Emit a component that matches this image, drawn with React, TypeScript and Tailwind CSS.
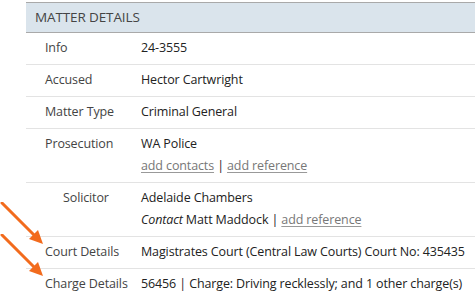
const Row = ({
  label,
  children,
  indent = false,
}: {
  label: string;
  children: React.ReactNode;
  indent?: boolean;
}) => (
  <div className="flex border-b border-[#e3e3e3] pt-[4px] pb-[5px] leading-[22px]">
    <div className={`w-[115px] shrink-0 text-[#444] ${indent ? "pl-[37px]" : "pl-[19px]"}`}>
      {label}
    </div>
    <div className="whitespace-nowrap text-[#222]">{children}</div>
  </div>
);

const Link = ({ children }: { children: React.ReactNode }) => (
  <span className="text-[#777] underline underline-offset-2 decoration-[#999]">{children}</span>
);

const Arrow = ({ top }: { top: number }) => (
  <svg
    className="absolute left-0"
    style={{ top }}
    width="48"
    height="48"
    viewBox="0 0 48 48"
  >
    <line x1="2" y1="1" x2="36" y2="35" stroke="#f26b1d" strokeWidth="3" strokeLinecap="round" />
    <polygon points="43,42 29,37 38,28" fill="#f26b1d" />
  </svg>
);

export default function App() {
  return (
    <div
      className="relative h-[293px] w-[475px] overflow-hidden bg-white pt-[2px] pl-[26px] text-[12.5px] tracking-[-0.12px]"
      style={{ fontFamily: '"Open Sans", "Noto Sans", sans-serif' }}
    >
      <div className="border-y border-[#a9a9a9] bg-[#dae4ec] pl-[9px] h-[31px] leading-[29px] text-[13.5px] text-[#444]">
        MATTER DETAILS
      </div>
      <Row label="Info">24-3555</Row>
      <Row label="Accused">Hector Cartwright</Row>
      <Row label="Matter Type">Criminal General</Row>
      <Row label="Prosecution">
        <div>WA Police</div>
        <div>
          <Link>add contacts</Link> | <Link>add reference</Link>
        </div>
      </Row>
      <Row label="Solicitor" indent>
        <div>Adelaide Chambers</div>
        <div>
          <i>Contact</i> Matt Maddock | <Link>add reference</Link>
        </div>
      </Row>
      <Row label="Court Details">Magistrates Court (Central Law Courts) Court No: 435435</Row>
      <Row label="Charge Details">56456 | Charge: Driving recklessly; and 1 other charge(s)</Row>
      <Arrow top={202} />
      <Arrow top={234} />
    </div>
  );
}
